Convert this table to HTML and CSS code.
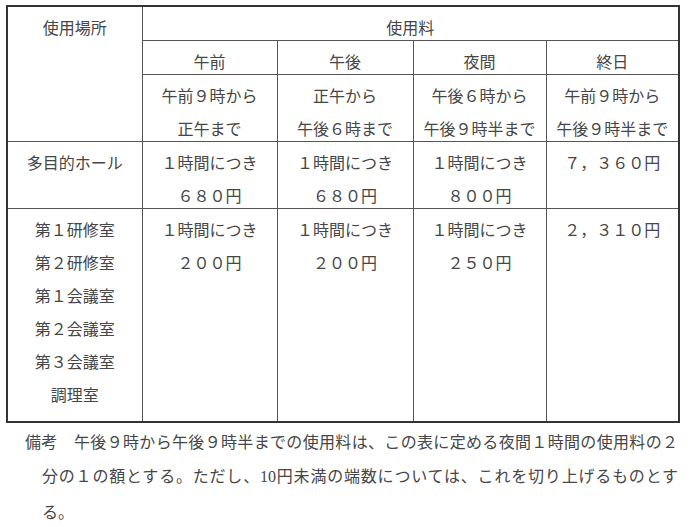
FILE: index.html
```html
<!DOCTYPE html>
<html lang="ja">
<head>
<meta charset="utf-8">
<title>使用料</title>
<link rel="stylesheet" href="styles.css">
</head>
<body>
<table class="fee">
  <colgroup>
    <col class="c1"><col class="c2"><col class="c3"><col class="c4"><col class="c5">
  </colgroup>
  <tr>
    <td rowspan="3"><p>使用場所</p></td>
    <td colspan="4"><p>使用料</p></td>
  </tr>
  <tr>
    <td><p>午前</p></td>
    <td><p>午後</p></td>
    <td><p>夜間</p></td>
    <td><p>終日</p></td>
  </tr>
  <tr>
    <td><p>午前９時から</p><p>正午まで</p></td>
    <td><p>正午から</p><p>午後６時まで</p></td>
    <td><p>午後６時から</p><p>午後９時半まで</p></td>
    <td><p>午前９時から</p><p>午後９時半まで</p></td>
  </tr>
  <tr>
    <td><p>多目的ホール</p></td>
    <td><p>１時間につき</p><p>６８０円</p></td>
    <td><p>１時間につき</p><p>６８０円</p></td>
    <td><p>１時間につき</p><p>８００円</p></td>
    <td><p>７，３６０円</p></td>
  </tr>
  <tr class="last">
    <td><p>第１研修室</p><p>第２研修室</p><p>第１会議室</p><p>第２会議室</p><p>第３会議室</p><p>調理室</p></td>
    <td><p>１時間につき</p><p>２００円</p></td>
    <td><p>１時間につき</p><p>２００円</p></td>
    <td><p>１時間につき</p><p>２５０円</p></td>
    <td><p>２，３１０円</p></td>
  </tr>
</table>
<div class="note">
  <div class="line first">備考　午後９時から午後９時半までの使用料は、この表に定める夜間１時間の使用料の２</div>
  <div class="line">分の１の額とする。ただし、<span class="num">10</span>円未満の端数については、これを切り上げるものとす</div>
  <div class="line end">る。</div>
</div>
</body>
</html>
```

FILE: styles.css
```css
html, body {
  margin: 0;
  padding: 0;
  background: #ffffff;
}

body {
  font-family: "Noto Sans CJK JP", "Noto Sans", sans-serif;
  font-size: 16px;
  color: #464646;
}

.fee {
  border-collapse: collapse;
  table-layout: fixed;
  width: 672px;
  margin: 5px 0 0 6px;
  border: 2px solid #333333;
}

.c1 { width: 135px; }
.c2 { width: 135px; }
.c3 { width: 136px; }
.c4 { width: 133px; }
.c5 { width: 133px; }

.fee td {
  border: 1px solid #555555;
  padding: 7px 0 0;
  vertical-align: top;
  text-align: center;
}

.fee p {
  margin: 0;
  line-height: 26px;
  white-space: nowrap;
}

.fee p + p {
  margin-top: 7px;
}

.fee tr.last td {
  padding-bottom: 14px;
}

.note {
  margin: 1px 12px 0 42px;
}

.note .line {
  line-height: 34px;
  text-align: justify;
  text-align-last: justify;
  white-space: nowrap;
}

.note .line.first {
  margin-left: -17px;
}

.note .line.end {
  text-align-last: left;
}

.num {
  font-family: "Liberation Serif", serif;
}
```
